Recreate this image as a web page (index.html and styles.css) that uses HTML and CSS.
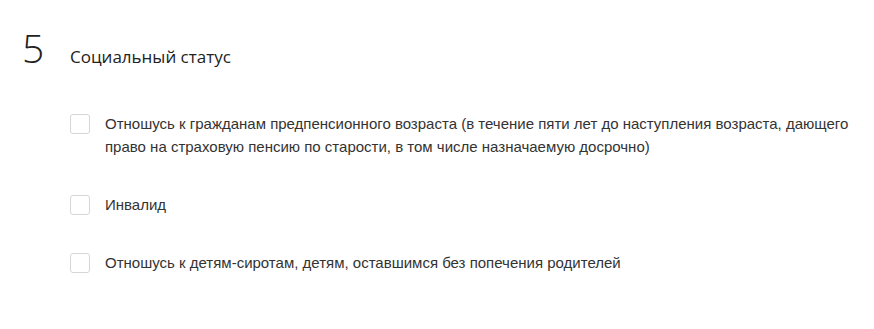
FILE: index.html
```html
<!DOCTYPE html>
<html lang="ru">
<head>
    <meta charset="UTF-8">
    <title>Социальный статус</title>
    <link rel="stylesheet" href="styles.css">
</head>
<body>
    <section class="step">
        <div class="step-head">
            <span class="step-num">5</span>
            <h2 class="step-title">Социальный статус</h2>
        </div>

        <div class="options">
            <label class="option">
                <input type="checkbox">
                <span class="box"></span>
                <span class="option-text">Отношусь к гражданам предпенсионного возраста (в течение пяти лет до наступления возраста, дающего право на страховую пенсию по старости, в том числе назначаемую досрочно)</span>
            </label>
            <label class="option">
                <input type="checkbox">
                <span class="box"></span>
                <span class="option-text">Инвалид</span>
            </label>
            <label class="option">
                <input type="checkbox">
                <span class="box"></span>
                <span class="option-text">Отношусь к детям-сиротам, детям, оставшимся без попечения родителей</span>
            </label>
        </div>
    </section>
</body>
</html>
```

FILE: styles.css
```css
* {
    margin: 0;
    padding: 0;
    box-sizing: border-box;
}

body {
    background: #fff;
    font-family: "Liberation Sans", Arial, sans-serif;
    color: #333;
}

.step {
    padding: 25px 20px 0 22px;
}

.step-head {
    display: flex;
    align-items: baseline;
}

.step-num {
    width: 48px;
    font-family: "Open Sans", sans-serif;
    font-weight: 300;
    font-size: 39px;
    line-height: 46px;
    color: #222;
}

.step-title {
    font-family: "Open Sans", sans-serif;
    font-weight: 400;
    font-size: 17px;
    color: #222;
}

.options {
    padding: 41px 0 0 48px;
    display: flex;
    flex-direction: column;
    gap: 35px;
}

.option {
    display: flex;
    align-items: flex-start;
    cursor: pointer;
}

.option input {
    display: none;
}

.box {
    flex: none;
    width: 20px;
    height: 20px;
    margin-top: 2px;
    margin-right: 15px;
    border: 1px solid #d6d6d6;
    border-radius: 3px;
    background: #fff;
}

.option-text {
    font-size: 15px;
    line-height: 23px;
}
```
